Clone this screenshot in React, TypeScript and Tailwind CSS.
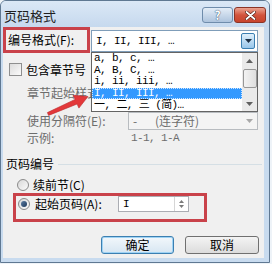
import React from "react";

// 页码格式 dialog (Win7 look) with the number format list dropped down

const formats = [
  { id: 1, label: "a, b, c, …" },
  { id: 2, label: "A, B, C, …" },
  { id: 3, label: "i, ii, iii, …" },
  { id: 4, label: "I, II, III, …", selected: true },
  { id: 5, label: "一, 二, 三 (简)…" },
];

function DownArrow({ color = "#1d2f44" }: { color?: string }) {
  return (
    <svg width="7" height="4" viewBox="0 0 7 4">
      <path d="M0 0 H7 L3.5 4 Z" fill={color} />
    </svg>
  );
}

function Radio({ checked }: { checked?: boolean }) {
  return (
    <div className="w-[12px] h-[12px] rounded-full border border-[#8a8a8a] bg-gradient-to-br from-[#d8d8d8] to-[#fbfbfb] flex items-center justify-center shrink-0">
      {checked && <div className="w-[6px] h-[6px] rounded-full bg-gradient-to-br from-[#5d7ea3] to-[#1f3a5c]" />}
    </div>
  );
}

export default function App() {
  return (
    <div className="w-[272px] h-[264px] bg-[#eef3f8] relative overflow-hidden font-['Noto_Sans_CJK_SC',sans-serif] text-[12px] leading-[12px] text-black">
      <div className="w-[270px] h-[263px] border border-[#5f7892] rounded-t-[6px] bg-[#c8dbef] flex flex-col">
        {/* title bar */}
        <div className="h-[26px] flex items-start shrink-0 bg-gradient-to-b from-[#dbe8f6] to-[#c6d9ee] rounded-t-[5px]">
          <span className="ml-[3px] mt-[8px] text-[13px] leading-[13px] text-[#1e1e1e]">页码格式</span>
          <div className="ml-auto mr-[3px] mt-[6px] flex gap-[1px]">
            <div className="w-[31px] h-[16px] rounded-[3px] border border-[#6f8cab] bg-gradient-to-b from-[#e4edf7] to-[#aec4dd] flex items-center justify-center text-[12px] leading-[12px] font-bold text-white [text-shadow:0_0_1px_#34506e,0_0_1px_#34506e]">
              ?
            </div>
            <div className="w-[32px] h-[16px] rounded-[3px] border border-[#8b3426] bg-gradient-to-b from-[#eaa391] via-[#d2543d] to-[#c8442c] flex items-center justify-center">
              <svg width="11" height="9" viewBox="0 0 11 9">
                <path d="M1.5 1 L9.5 8 M9.5 1 L1.5 8" stroke="#4a1a12" strokeWidth="3" strokeLinecap="round" />
                <path d="M1.5 1 L9.5 8 M9.5 1 L1.5 8" stroke="#ffffff" strokeWidth="1.8" strokeLinecap="round" />
              </svg>
            </div>
          </div>
        </div>

        {/* body */}
        <div className="flex flex-1">
          <div className="w-[2px] shrink-0" />
          <div className="w-[261px] h-[231px] bg-[#f0f0f0] relative flex flex-col">
            {/* 编号格式 */}
            <div className="h-[26px] flex">
              <div className="w-[87px] h-[26px] border-[3px] border-[#c9424a] flex items-center pl-[2px]">
                编号格式(F):
              </div>
              <div className="ml-[1px] mt-[3px] w-[167px] h-[22px] bg-white border border-[#7f9db9] flex items-center font-['Liberation_Mono','Noto_Sans_CJK_SC',monospace] text-[11px] tracking-[-0.6px]">
                <span className="pl-[4px] flex-1">I, II, III, …</span>
                <div className="w-[14px] h-[16px] mr-[2px] rounded-[2px] border border-[#3c7fb1] bg-gradient-to-b from-[#e1f0fb] to-[#98c6ea] flex items-center justify-center">
                  <DownArrow />
                </div>
              </div>
            </div>

            <div className="mt-[10px] h-[13px] flex items-center pl-[6px] gap-[4px]">
              <div className="w-[13px] h-[13px] border border-[#8e8f8f] bg-gradient-to-br from-[#dcdcdc] to-[#fbfbfb]" />
              <span>包含章节号</span>
            </div>

            {/* partly hidden under the open list */}
            <div className="mt-[11px] h-[12px] ml-[24px] w-[64px] overflow-hidden whitespace-nowrap text-[#6d6d6d]">章节起始样式(H):</div>

            <div className="mt-[13px] h-[18px] flex items-center text-[#6d6d6d]">
              <span className="pl-[24px] w-[125px]">使用分隔符(E):</span>
              <div className="w-[130px] h-[18px] border border-[#b8bcc0] bg-[#f4f4f4] flex items-center">
                <span className="pl-[4px] w-[26px]">-</span>
                <span className="flex-1">(连字符)</span>
                <div className="w-[14px] flex justify-center mr-[1px]">
                  <DownArrow color="#a8a8a8" />
                </div>
              </div>
            </div>

            <div className="mt-[2px] h-[12px] flex items-center text-[#6d6d6d]">
              <span className="pl-[24px] w-[128px]">示例:</span>
              <span className="font-['Liberation_Mono',monospace] text-[11px] tracking-[-0.6px]">1-1, 1-A</span>
            </div>

            <div className="mt-[14px] h-[12px] flex items-center">
              <span className="pl-[3px]">页码编号</span>
              <div className="flex-1 h-px bg-[#d5dfe5] ml-[4px] mr-[2px]" />
            </div>

            <div className="mt-[8px] h-[13px] flex items-center pl-[14px] gap-[4px]">
              <Radio />
              <span>续前节(C)</span>
            </div>

            <div className="mt-[2px] ml-[10px] w-[194px] h-[29px] border-[3px] border-[#c9424a]">
              <div className="h-[16px] flex items-center pl-[2px]">
                <Radio checked />
                <span className="ml-[5px] w-[83px]">起始页码(A):</span>
                <div className="w-[71px] h-[16px] bg-white border border-[#abadb3] flex items-center font-['Liberation_Mono',monospace] text-[11px]">
                  <span className="pl-[4px] flex-1">I</span>
                  <div className="w-[14px] h-[14px] border-l border-[#d6d6d6] flex flex-col items-center justify-center gap-[2px]">
                    <svg width="5" height="3" viewBox="0 0 5 3"><path d="M0 3 L2.5 0 L5 3 Z" fill="#7a7a7a" /></svg>
                    <svg width="5" height="3" viewBox="0 0 5 3"><path d="M0 0 H5 L2.5 3 Z" fill="#7a7a7a" /></svg>
                  </div>
                </div>
              </div>
            </div>

            <div className="mt-[14px] flex justify-end pr-[5px] gap-[11px]">
              <div className="w-[73px] h-[18px] rounded-[3px] border border-[#3c7fb1] bg-gradient-to-b from-[#f2f7fb] to-[#d7e6f2] flex items-center justify-center shadow-[inset_0_0_0_1px_#9fd3f4]">
                确定
              </div>
              <div className="w-[74px] h-[18px] rounded-[3px] border border-[#707070] bg-gradient-to-b from-[#f4f4f4] to-[#dcdcdc] flex items-center justify-center">
                取消
              </div>
            </div>

            {/* dropped-down list */}
            <div className="absolute left-[88px] top-[25px] w-[167px] h-[60px] bg-white border border-[#646464] flex font-['Liberation_Mono','Noto_Sans_CJK_SC',monospace] text-[11px] leading-[11px] tracking-[-0.6px]">
              <div className="flex-1 flex flex-col">
                {formats.map((f) => (
                  <div
                    key={f.id}
                    className={
                      f.selected
                        ? "h-[11.6px] overflow-hidden flex items-center pl-[2px] bg-[#3399ff] text-white outline-1 outline-dotted -outline-offset-1 outline-[#cfe6ff]"
                        : "h-[11.6px] overflow-hidden flex items-center pl-[2px]"
                    }
                  >
                    {f.label}
                  </div>
                ))}
              </div>
              <div className="w-[15px] bg-[#eaeaea] flex flex-col items-center">
                <div className="h-[15px] flex items-center justify-center">
                  <svg width="7" height="4" viewBox="0 0 7 4"><path d="M0 4 L3.5 0 L7 4 Z" fill="#606060" /></svg>
                </div>
                <div className="mt-[1px] w-[14px] h-[19px] rounded-[2px] border border-[#979797] bg-gradient-to-r from-[#f3f3f3] to-[#dedede]" />
                <div className="mt-auto h-[14px] flex items-center justify-center">
                  <DownArrow color="#606060" />
                </div>
              </div>
            </div>
          </div>
          <div className="flex-1" />
        </div>
      </div>

      {/* red pointer arrow */}
      <svg className="absolute left-0 top-0" width="272" height="264" viewBox="0 0 272 264">
        <polygon
          points="47.4,112.6 75.1,99.4 73.3,95.3 88,96.5 78.9,108.1 77.1,104 48.6,115.4"
          fill="#e3383a"
          stroke="#b8282a"
          strokeWidth="0.6"
        />
      </svg>
    </div>
  );
}
